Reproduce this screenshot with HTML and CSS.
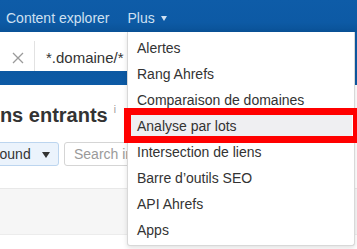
FILE: index.html
```html
<!DOCTYPE html>
<html lang="fr">
<head>
<meta charset="utf-8">
<title>Liens entrants</title>
<link rel="stylesheet" href="styles.css">
</head>
<body>
<header class="topbar">
  <a class="nav-item">Content explorer</a>
  <a class="nav-item nav-plus">Plus <span class="caret"></span></a>
</header>
<div class="searchrow">
  <div class="searchbar">
    <span class="clear"><svg width="12" height="12" viewBox="0 0 12 12"><path d="M1 1L11 11M11 1L1 11" stroke="#9a9a9a" stroke-width="1.3" fill="none"/></svg></span>
    <span class="query">*.domaine/*</span>
  </div>
</div>
<div class="subbar"></div>
<main class="page">
  <h1 class="title">Liens entrants<sup class="info">i</sup></h1>
  <div class="filters">
    <div class="select">Found <span class="caret dark"></span></div>
    <div class="search">Search in results</div>
  </div>
  <div class="band"></div>
</main>
<ul class="menu">
  <li class="menu-item">Alertes</li>
  <li class="menu-item">Rang Ahrefs</li>
  <li class="menu-item">Comparaison de domaines</li>
  <li class="menu-item active">Analyse par lots</li>
  <li class="menu-item">Intersection de liens</li>
  <li class="menu-item">Barre d’outils SEO</li>
  <li class="menu-item">API Ahrefs</li>
  <li class="menu-item">Apps</li>
</ul>
<div class="highlight-box"></div>
</body>
</html>
```
FILE: styles.css
```css
html, body {
  margin: 0;
  padding: 0;
}
body {
  width: 357px;
  height: 249px;
  overflow: hidden;
  position: relative;
  background: #fff;
  font-family: "Liberation Sans", Arial, Helvetica, sans-serif;
  color: #333;
}
.topbar {
  height: 32px;
  background: linear-gradient(#0e5ca8 0%, #0d5aa5 70%, #0a5297 100%);
  display: flex;
  align-items: center;
  padding-left: 6px;
  gap: 18px;
}
.nav-item {
  color: #cfe0f1;
  font-size: 14px;
  line-height: 16px;
  display: flex;
  align-items: center;
  margin-top: 4px;
}
.caret {
  display: inline-block;
  width: 0;
  height: 0;
  border-left: 3.5px solid transparent;
  border-right: 3.5px solid transparent;
  border-top: 5px solid #cfe0f1;
  margin-left: 6px;
  margin-top: 1px;
}
.caret.dark {
  border-top-color: #333;
  border-left-width: 4px;
  border-right-width: 4px;
  border-top-width: 6px;
  margin-left: 11px;
}
.searchrow {
  height: 39px;
  background: #0d5aa5;
  display: flex;
}
.searchbar {
  width: 310px;
  background: #fff;
  display: flex;
  align-items: stretch;
}
.clear {
  width: 35px;
  display: flex;
  align-items: center;
  justify-content: center;
  padding-top: 12px;
  box-sizing: border-box;
  position: relative;
}
.clear::after {
  content: "";
  position: absolute;
  right: 0;
  top: 9px;
  bottom: 0;
  width: 1px;
  background: #e2e2e2;
}
.query {
  padding-left: 11px;
  font-size: 15px;
  display: flex;
  align-items: center;
  padding-top: 12px;
  color: #333;
}
.subbar {
  height: 14px;
  background: linear-gradient(#0c58a2, #0d5aa5);
}
.page {
  margin-left: -29px;
}
.title {
  margin: 18px 0 0 0;
  font-size: 20px;
  line-height: 24px;
  font-weight: bold;
  color: #333;
}
.info {
  font-size: 10px;
  font-weight: normal;
  color: #999;
  margin-left: 6px;
  vertical-align: 9px;
  line-height: 0;
}
.filters {
  margin-top: 15px;
  padding-left: 10px;
  display: flex;
  gap: 5px;
}
.select {
  width: 78px;
  height: 24px;
  box-sizing: border-box;
  background: #ebf3fc;
  border: 1px solid #bcd5ef;
  border-radius: 3px;
  font-size: 14px;
  padding-left: 9px;
  display: flex;
  align-items: center;
  color: #333;
}
.search {
  width: 220px;
  height: 24px;
  box-sizing: border-box;
  border: 1px solid #d5d5d5;
  border-radius: 3px;
  font-size: 14px;
  padding-left: 9px;
  display: flex;
  align-items: center;
  color: #9a9a9a;
}
.band {
  margin-top: 22px;
  height: 45px;
  background: #f6f6f6;
  border-top: 1px solid #e8e8e8;
  border-bottom: 1px solid #ececec;
}
.menu {
  position: absolute;
  left: 127px;
  top: 32px;
  width: 228px;
  margin: 0;
  padding: 3px 0 2px;
  list-style: none;
  background: #fff;
  border: 1px solid #d8d8d8;
  border-top: none;
  border-radius: 0 0 3px 3px;
  box-shadow: 0 2px 5px rgba(0, 0, 0, 0.12);
  box-sizing: border-box;
}
.menu-item {
  height: 26px;
  line-height: 26px;
  padding-left: 9px;
  font-size: 14px;
  color: #333;
  margin: 0 2px 0 3px;
  padding-left: 6px;
}
.menu-item.active {
  background: #efeff2;
}
.highlight-box {
  position: absolute;
  left: 124px;
  top: 108px;
  width: 222px;
  height: 21px;
  border: 7px solid #ff0000;
  border-right-width: 4px;
}
```
